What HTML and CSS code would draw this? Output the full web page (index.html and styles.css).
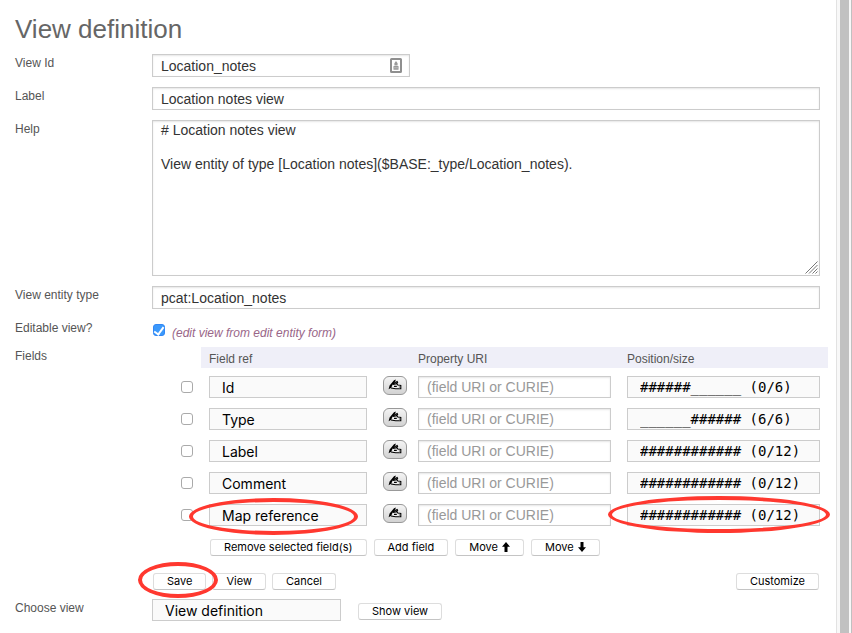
FILE: index.html
```html
<!DOCTYPE html>
<html lang="en">
<head>
<meta charset="utf-8">
<title>View definition</title>
<link rel="stylesheet" href="styles.css">
</head>
<body>
<svg class="defs" aria-hidden="true">
  <symbol id="hand" viewBox="0 0 14 11">
    <path d="M3.6 8.2 5.4 4.6 9 4.4 9.4 5.6 12.6 6.2V9.6H7.6Z" fill="#eee"/>
    <path d="M0.6 10.2 1.6 6.6 6 1.2 7.8 0.6 7.4 2.2 4.4 6 3.2 8.8Z" fill="#000"/>
    <path d="M4.6 4.8 9.2 2.6 9.6 3.6 7 5.2M5 5.4 9 4.6 9.8 6 12.8 6.4V9.8H7.6L3 9M6 7.4H8.8" fill="none" stroke="#000" stroke-width="1.1"/>
    <path d="M11.4 6.4V9.6" stroke="#777" stroke-width="0.8"/>
  </symbol>
  <symbol id="arrow" viewBox="0 0 8 10">
    <path d="M4 0 8 4.8H5.5V10H2.5V4.8H0Z"/>
  </symbol>
</svg>
<div class="window">
  <main class="page">
    <h1>View definition</h1>
    <form class="form" onsubmit="return false">
      <label class="label" for="view-id">View Id</label>
      <div class="field id-field">
        <input class="text" id="view-id" type="text" value="Location_notes">
        <svg class="id-icon" viewBox="0 0 12 15" aria-hidden="true">
          <rect x="1" y="1" width="10" height="13" rx="0.5" fill="#fff" stroke="#8f8f8f" stroke-width="2"/>
          <path d="M6 3 7.6 5.2V7.4H4.4V5.2ZM3.5 8h5v3.8h-5Z" fill="#999"/>
          <path d="M3.5 9.8h5" stroke="#bbb"/>
        </svg>
      </div>

      <label class="label" for="view-label">Label</label>
      <div class="field"><input class="text" id="view-label" type="text" value="Location notes view"></div>

      <label class="label" for="view-help">Help</label>
      <div class="field help-field">
        <textarea class="text help" id="view-help"># Location notes view

View entity of type [Location notes]($BASE:_type/Location_notes).</textarea>
        <svg class="grip" viewBox="0 0 13 13" aria-hidden="true">
          <path d="M0.5 12.5 12.5 0.5M4 12.5 12.5 4M7.5 12.5 12.5 7.5M10.5 12.5 12.5 10.5" stroke="#777"/>
        </svg>
      </div>

      <label class="label" for="entity-type">View entity type</label>
      <div class="field"><input class="text" id="entity-type" type="text" value="pcat:Location_notes"></div>

      <label class="label" for="editable">Editable view?</label>
      <div class="field editable">
        <input class="check" id="editable" type="checkbox" checked>
        <em>(edit view from edit entity form)</em>
      </div>

      <span class="label">Fields</span>
      <div class="fields">
        <table class="grid">
          <thead>
            <tr><td class="select-col"></td><th>Field ref</th><th>Property URI</th><th>Position/size</th></tr>
          </thead>
          <tbody>
            <tr>
              <td class="select-col"><input class="check" type="checkbox" aria-label="Select Id"></td>
              <td><div class="ref"><div class="mark"><select class="choice" aria-label="Field ref"><option>Id</option></select></div><button class="edit" type="button" aria-label="Edit field"><svg><use href="#hand"/></svg></button></div></td>
              <td><input class="text" type="text" placeholder="(field URI or CURIE)" aria-label="Property URI"></td>
              <td><select class="choice mono" aria-label="Position/size"><option>######______ (0/6)</option></select></td>
            </tr>
            <tr>
              <td class="select-col"><input class="check" type="checkbox" aria-label="Select Type"></td>
              <td><div class="ref"><div class="mark"><select class="choice" aria-label="Field ref"><option>Type</option></select></div><button class="edit" type="button" aria-label="Edit field"><svg><use href="#hand"/></svg></button></div></td>
              <td><input class="text" type="text" placeholder="(field URI or CURIE)" aria-label="Property URI"></td>
              <td><select class="choice mono" aria-label="Position/size"><option>______###### (6/6)</option></select></td>
            </tr>
            <tr>
              <td class="select-col"><input class="check" type="checkbox" aria-label="Select Label"></td>
              <td><div class="ref"><div class="mark"><select class="choice" aria-label="Field ref"><option>Label</option></select></div><button class="edit" type="button" aria-label="Edit field"><svg><use href="#hand"/></svg></button></div></td>
              <td><input class="text" type="text" placeholder="(field URI or CURIE)" aria-label="Property URI"></td>
              <td><select class="choice mono" aria-label="Position/size"><option>############ (0/12)</option></select></td>
            </tr>
            <tr>
              <td class="select-col"><input class="check" type="checkbox" aria-label="Select Comment"></td>
              <td><div class="ref"><div class="mark"><select class="choice" aria-label="Field ref"><option>Comment</option></select></div><button class="edit" type="button" aria-label="Edit field"><svg><use href="#hand"/></svg></button></div></td>
              <td><input class="text" type="text" placeholder="(field URI or CURIE)" aria-label="Property URI"></td>
              <td><select class="choice mono" aria-label="Position/size"><option>############ (0/12)</option></select></td>
            </tr>
            <tr>
              <td class="select-col"><input class="check" type="checkbox" aria-label="Select Map reference"></td>
              <td><div class="ref"><div class="mark"><select class="choice" aria-label="Field ref"><option>Map reference</option></select><span class="ring ring-ref"></span></div><button class="edit" type="button" aria-label="Edit field"><svg><use href="#hand"/></svg></button></div></td>
              <td><input class="text" type="text" placeholder="(field URI or CURIE)" aria-label="Property URI"></td>
              <td><div class="mark"><select class="choice mono" aria-label="Position/size"><option>############ (0/12)</option></select><span class="ring ring-pos"></span></div></td>
            </tr>
          </tbody>
        </table>
        <div class="buttons field-buttons">
          <button class="btn" type="button">Remove selected field(s)</button>
          <button class="btn" type="button">Add field</button>
          <button class="btn" type="button">Move <svg class="arrow"><use href="#arrow"/></svg></button>
          <button class="btn" type="button">Move <svg class="arrow down"><use href="#arrow"/></svg></button>
        </div>
      </div>

      <div class="buttons form-buttons">
        <div class="mark save"><button class="btn" type="submit">Save</button><span class="ring ring-save"></span></div>
        <button class="btn" type="button">View</button>
        <button class="btn" type="button">Cancel</button>
        <button class="btn customize" type="button">Customize</button>
      </div>

      <label class="label" for="choose">Choose view</label>
      <div class="chooser">
        <select class="choice" id="choose"><option>View definition</option></select>
        <button class="btn" type="button">Show view</button>
      </div>
    </form>
  </main>
  <div class="scroll" aria-hidden="true"><div class="thumb"></div></div>
</div>
</body>
</html>
```

FILE: styles.css
```css
* {
  box-sizing: border-box;
}

body {
  margin: 0;
  background: #fff;
  color: #555;
  font: 12px/18px "Liberation Sans", Arial, sans-serif;
}

.defs {
  position: absolute;
  width: 0;
  height: 0;
}

.window {
  display: flex;
  min-height: 100vh;
}

.page {
  flex: 1;
  min-width: 0;
  padding: 12px 16px 0 15px;
}

.scroll {
  display: flex;
  width: 16px;
  padding: 0 2px 0 3px;
  background: #f8f8f8;
  border-left: 1px solid #e2e2e2;
  border-right: 1px solid #c0c0c0;
}

.thumb {
  flex: 1;
  background: #c1c1c1;
}

h1 {
  margin: 0 0 8px;
  color: #666;
  font-size: 26px;
  font-weight: normal;
  line-height: 34px;
}

.form {
  display: grid;
  grid-template-columns: 137px minmax(0, 1fr);
  row-gap: 10px;
}

.field {
  min-width: 0;
}

.text,
.choice {
  display: block;
  width: 100%;
  height: 22px;
  margin: 0;
  border: 1px solid #ccc;
  border-radius: 0;
  outline: none;
}

.text {
  padding: 0 8px;
  background: #fff;
  box-shadow: inset 0 1px 2px rgba(0, 0, 0, 0.1);
  color: #333;
  font: 14px/17px "Liberation Sans", Arial, sans-serif;
}

.field .text {
  height: 23px;
}

.text::placeholder {
  color: #999;
}

.choice {
  padding: 1px 12px 0;
  appearance: none;
  background: #fafafa;
  color: #000;
  font: 14px/20px Inter, Roboto, sans-serif;
}

.mono {
  padding-top: 0;
  font-family: "DejaVu Sans Mono", monospace;
}

.id-field {
  position: relative;
  width: 258px;
}

.id-icon {
  position: absolute;
  top: 4px;
  right: 8px;
  width: 12px;
  height: 15px;
}

.help-field {
  position: relative;
}

.field .help {
  height: 156px;
  padding-top: 1px;
  resize: none;
}

.grip {
  position: absolute;
  right: 2px;
  bottom: 2px;
  width: 13px;
  height: 13px;
}

.check {
  display: block;
  width: 12px;
  height: 12px;
  margin: 0;
  appearance: none;
  background: #fff;
  border: 1px solid #aaa;
  border-radius: 3px;
}

.check:checked {
  border-color: #3187f5;
  background: #3b99fc;
}

.check:checked::after {
  content: "";
  display: block;
  width: 4px;
  height: 8px;
  margin: 0 auto;
  border: solid #fff;
  border-width: 0 2px 2px 0;
  transform: rotate(36deg);
}

.editable {
  display: flex;
  align-items: flex-start;
  gap: 7px;
  margin-bottom: -1px;
  padding: 5px 1px 0;
  color: #996688;
}

.editable em {
  margin-bottom: -5px;
}

.fields {
  margin-right: -8px;
}

.grid {
  width: 100%;
  border-collapse: collapse;
  table-layout: fixed;
}

.grid th {
  height: 21px;
  padding: 3px 8px 0;
  background: #efeff8;
  font-weight: normal;
  line-height: 18px;
  text-align: left;
}

.grid td {
  padding: 8px 8px 2px;
  vertical-align: top;
}

.grid thead td {
  padding: 0;
}

.grid .select-col {
  width: 49px;
}

.grid tbody .select-col {
  padding: 13px 8px 0 29px;
}

.ref {
  display: flex;
  align-items: flex-start;
  gap: 16px;
  margin-right: -5px;
}

.mark {
  position: relative;
}

.ref .mark {
  flex: 1;
  min-width: 0;
}

.save {
  display: flex;
}

.edit {
  display: flex;
  align-items: center;
  justify-content: center;
  width: 24px;
  height: 19px;
  padding: 0 0 2px;
  background: linear-gradient(#f4f4f4, #d2d2d2);
  border: 1px solid #999;
  border-radius: 6px;
}

.edit svg {
  width: 14px;
  height: 11px;
}

.buttons {
  display: flex;
  gap: 7px;
}

.btn {
  height: 17px;
  padding: 0 13px;
  background: #fff;
  border: 1px solid #ddd;
  border-bottom-color: #c4c4c4;
  border-radius: 3px;
  color: #000;
  font: 11px/15px Inter, Roboto, sans-serif;
  white-space: nowrap;
}

.arrow {
  width: 8px;
  height: 10px;
  margin-left: 1px;
  vertical-align: -1px;
}

.down {
  transform: rotate(180deg);
}

.field-buttons {
  padding: 11px 0 0 58px;
}

.form-buttons {
  grid-column: 2;
  gap: 6px;
  padding: 7px 1px 0;
  margin-bottom: -1px;
}

.customize {
  margin-left: auto;
}

.chooser {
  display: flex;
  align-items: center;
  gap: 17px;
}

.chooser .choice {
  width: 189px;
}

.chooser .btn {
  margin-top: 3px;
}

/* Red ellipses drawn over the highlighted controls */
.ring {
  position: absolute;
  z-index: 1;
  border: 4px solid #ff382f;
  border-radius: 50%;
  pointer-events: none;
}

.ring-ref {
  inset: -6px 9px -9px -20px;
}

.ring-pos {
  inset: -8px -10px -7px -19px;
}

.ring-save {
  inset: -11px -12px -8px -15px;
}
```
